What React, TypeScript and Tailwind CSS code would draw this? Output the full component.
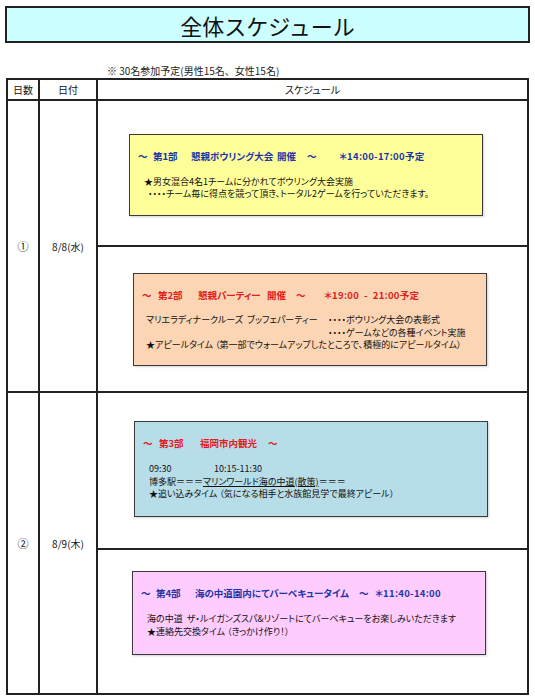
const jp = "font-['Noto_Sans_CJK_JP','Noto_Sans',sans-serif]";
const palt = "[font-feature-settings:'palt']";

function EventBox({
  bg,
  className,
  children,
}: {
  bg: string;
  className: string;
  children: React.ReactNode;
}) {
  return (
    <div
      className={`${bg} ${className} w-[354px] border border-[#3a3a3a] shadow-[1px_1px_2px_rgba(0,0,0,0.18)] pl-[8px] pt-[15px]`}
    >
      {children}
    </div>
  );
}

// heading pieces sit at fixed offsets, like the spaced-out cells of the original sheet
function Heading({ color, parts }: { color: string; parts: [string, string][] }) {
  return (
    <div className={`${color} ${palt} flex text-[9.5px] leading-[12px] font-bold whitespace-pre`}>
      {parts.map(([text, w], i) => (
        <span key={i} className={w}>
          {text}
        </span>
      ))}
    </div>
  );
}

export default function App() {
  return (
    <div className={`w-[535px] h-[700px] bg-white text-[#111] ${jp}`}>
      {/* Title */}
      <div className="pt-[6px] px-[5px]">
        <div className="h-[37px] border-2 border-[#222] bg-[#ccffff] flex items-center justify-center">
          <span className="text-[22px] leading-none text-[#111]">全体スケジュール</span>
        </div>
      </div>

      {/* Note */}
      <div className="h-[35px] flex items-end pl-[107px] pb-[1px]">
        <span className="text-[10px] leading-[12px] text-[#222]">※ 30名参加予定(男性15名、女性15名)</span>
      </div>

      {/* Table */}
      <div className={`ml-[6px] w-[523px] border-2 border-[#222] text-[10px] ${palt}`}>
        {/* Header */}
        <div className="grid grid-cols-[32px_58px_1fr] h-[21px] border-b-2 border-[#222]">
          <div className="border-r-2 border-[#222] flex items-center justify-center">日数</div>
          <div className="border-r-2 border-[#222] flex items-center justify-center">日付</div>
          <div className="flex items-center justify-center">スケジュール</div>
        </div>

        {/* Day 1 */}
        <div className="grid grid-cols-[32px_58px_1fr] h-[292px] border-b-2 border-[#222]">
          <div className="border-r-2 border-[#222] flex items-center justify-center text-[11px]">①</div>
          <div className="border-r-2 border-[#222] flex items-center justify-center">8/8(水)</div>
          <div className="flex flex-col">
            <div className="h-[146px] border-b-2 border-[#222] pt-[33px] pl-[31px]">
              <EventBox bg="bg-[#ffff99]" className="h-[82px]">
                <Heading
                  color="text-[#1d35a8]"
                  parts={[
                    ["～", "w-[15px]"],
                    ["第1部", "w-[38px]"],
                    ["懇親ボウリング大会", "w-[86px]"],
                    ["開催", "w-[30px]"],
                    ["～", "w-[32px]"],
                    ["＊14:00-17:00予定", "tracking-[0.3px]"],
                  ]}
                />
                <div className="mt-[14px] pl-[6px] text-[9px] leading-[12px] whitespace-pre">
                  <div>★男女混合4名1チームに分かれてボウリング大会実施</div>
                  <div>{"  ・・・・チーム毎に得点を競って頂き、トータル2ゲームを行っていただきます。"}</div>
                </div>
              </EventBox>
            </div>
            <div className="flex-1 pt-[26px] pl-[35px]">
              <EventBox bg="bg-[#fcd5b4]" className="h-[93px]">
                <Heading
                  color="text-[#e0201c]"
                  parts={[
                    ["～", "w-[16px]"],
                    ["第2部", "w-[40px]"],
                    ["懇親パーティー", "w-[69px]"],
                    ["開催", "w-[29px]"],
                    ["～", "w-[28px]"],
                    ["＊19:00  -  21:00予定", "tracking-[0.3px]"],
                  ]}
                />
                <div className="mt-[13px] pl-[4px] text-[9px] leading-[12.5px] whitespace-pre">
                  <div className="flex">
                    <span className="w-[182px]">マリエラディナークルーズ  ブッフェパーティー</span>
                    <span>・・・・ボウリング大会の表彰式</span>
                  </div>
                  <div className="pl-[182px]">・・・・ゲームなどの各種イベント実施</div>
                  <div>{"★アピールタイム （第一部でウォームアップしたところで、積極的にアピールタイム）"}</div>
                </div>
              </EventBox>
            </div>
          </div>
        </div>

        {/* Day 2 */}
        <div className="grid grid-cols-[32px_58px_1fr] h-[300px]">
          <div className="border-r-2 border-[#222] flex items-center justify-center text-[11px]">②</div>
          <div className="border-r-2 border-[#222] flex items-center justify-center">8/9(木)</div>
          <div className="flex flex-col">
            <div className="h-[157px] border-b-2 border-[#222] pt-[28px] pl-[36px]">
              <EventBox bg="bg-[#b7dde8]" className="h-[96px]">
                <Heading
                  color="text-[#e0201c]"
                  parts={[
                    ["～", "w-[16px]"],
                    ["第3部", "w-[41px]"],
                    ["福岡市内観光", "w-[68px]"],
                    ["～", ""],
                  ]}
                />
                <div className="mt-[14px] pl-[6px] text-[9px] leading-[12.5px] whitespace-pre">
                  <div className="flex">
                    <span className="w-[65px]">09:30</span>
                    <span>10:15-11:30</span>
                  </div>
                  <div>
                    博多駅＝＝＝<span className="underline">マリンワールド海の中道(散策)</span>＝＝＝
                  </div>
                  <div>{"★追い込みタイム （気になる相手と水族館見学で最終アピール）"}</div>
                </div>
              </EventBox>
            </div>
            <div className="flex-1 pt-[21px] pl-[34px]">
              <EventBox bg="bg-[#ffccff]" className="h-[84px]">
                <Heading
                  color="text-[#1d35a8]"
                  parts={[
                    ["～", "w-[15px]"],
                    ["第4部", "w-[39px]"],
                    ["海の中道園内にてバーベキュータイム", "w-[164px]"],
                    ["～", "w-[16px]"],
                    ["＊11:40-14:00", "tracking-[0.3px]"],
                  ]}
                />
                <div className="mt-[14px] pl-[6px] text-[9px] leading-[12.5px] whitespace-pre">
                  <div>海の中道  ザ・ルイガンズスパ&amp;リゾートにてバーベキューをお楽しみいただきます</div>
                  <div>{"★連絡先交換タイム （きっかけ作り！）"}</div>
                </div>
              </EventBox>
            </div>
          </div>
        </div>
      </div>
    </div>
  );
}
